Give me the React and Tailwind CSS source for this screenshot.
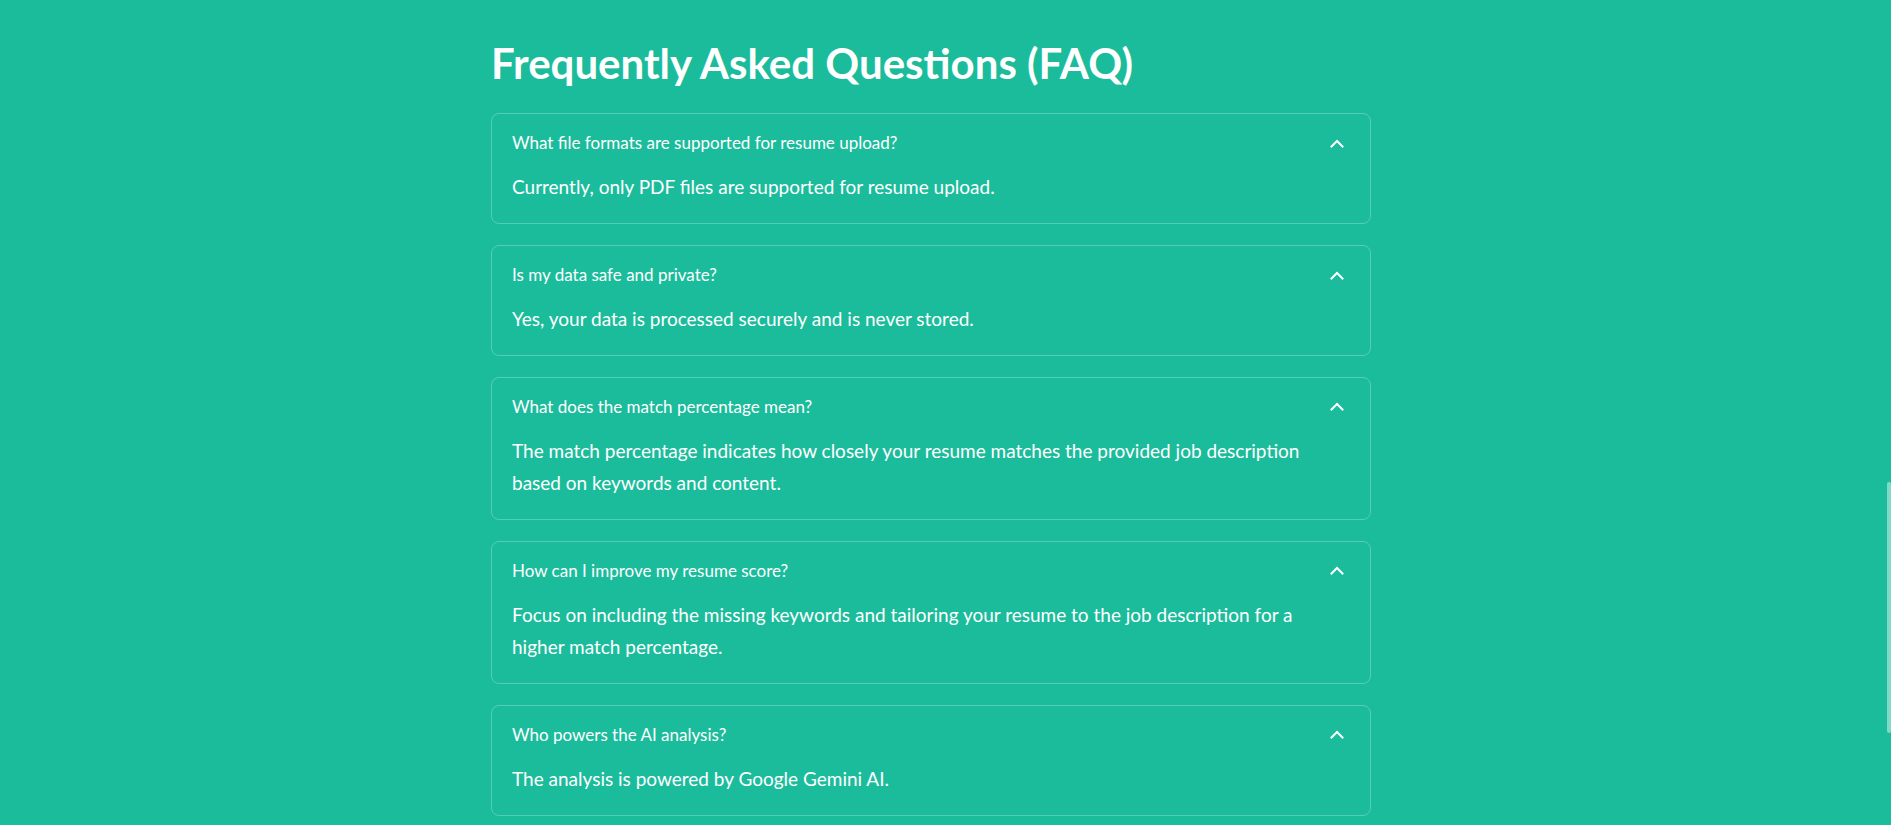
import React from 'react';

const faqs = [
  {
    q: 'What file formats are supported for resume upload?',
    a: 'Currently, only PDF files are supported for resume upload.',
  },
  {
    q: 'Is my data safe and private?',
    a: 'Yes, your data is processed securely and is never stored.',
  },
  {
    q: 'What does the match percentage mean?',
    a: 'The match percentage indicates how closely your resume matches the provided job description based on keywords and content.',
  },
  {
    q: 'How can I improve my resume score?',
    a: 'Focus on including the missing keywords and tailoring your resume to the job description for a higher match percentage.',
  },
  {
    q: 'Who powers the AI analysis?',
    a: 'The analysis is powered by Google Gemini AI.',
  },
];

const ChevronUp = () => (
  <svg width="14" height="9" viewBox="0 0 14 9" fill="none" className="block">
    <path d="M1.5 7.5 L7 2 L12.5 7.5" stroke="white" strokeWidth="2" strokeLinecap="square" />
  </svg>
);

const FaqItem = ({ item }) => (
  <div className="border border-white/25 rounded-lg pt-4 pb-5 pl-5 pr-[26px]">
    <div className="flex items-center justify-between h-[26px]">
      <p className="text-[17px] leading-[26px] text-white">{item.q}</p>
      <ChevronUp />
    </div>
    <p className="mt-[15px] text-[19px] leading-[32px] text-white pr-4">{item.a}</p>
  </div>
);

export default function App() {
  return (
    <div
      className="h-screen w-full overflow-hidden bg-[#1bbc9b] relative"
      style={{ fontFamily: 'Lato, "Noto Sans", sans-serif' }}
    >
      <div className="w-[880px] ml-[491px] pt-[38px]">
        <h1 className="text-[42px] leading-[1.2] font-bold text-white">Frequently Asked Questions (FAQ)</h1>
        <div className="mt-[25px] flex flex-col gap-[20.8px]">
          {faqs.map((item, i) => (
            <FaqItem key={i} item={item} />
          ))}
        </div>
      </div>
      <div className="absolute right-0 top-[482px] h-[251px] w-[4px] rounded-full bg-white/45" />
    </div>
  );
}
